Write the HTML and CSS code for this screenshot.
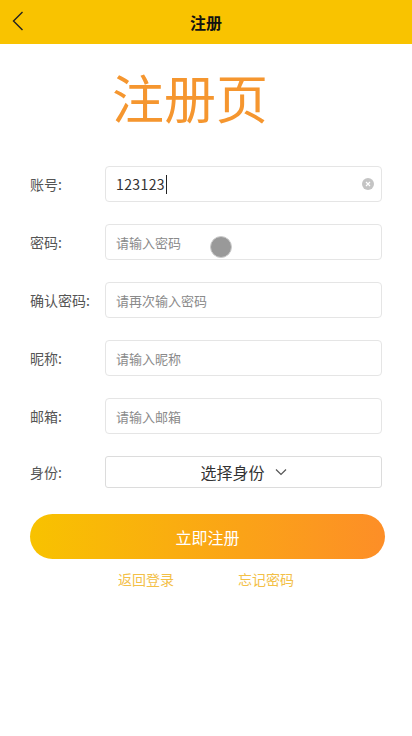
FILE: index.html
```html
<!DOCTYPE html>
<html lang="zh-CN">
<head>
    <meta charset="UTF-8">
    <meta name="viewport" content="width=device-width, initial-scale=1.0">
    <title>注册</title>
    <link rel="stylesheet" href="styles.css">
</head>
<body>

    <div class="header">
        <span class="back">
            <svg width="12" height="20" viewBox="0 0 12 20"><path d="M10.5 1 L1.5 10 L10.5 19" fill="none" stroke="#222" stroke-width="1.4"/></svg>
        </span>
        <span class="header-title">注册</span>
    </div>

    <h1 class="page-title">注册页</h1>

    <div class="form">
        <div class="row">
            <label for="account">账号:</label>
            <div class="field">
                <input type="text" id="account" value="123123">
                <span class="caret"></span>
                <span class="clear">
                    <svg width="6" height="6" viewBox="0 0 6 6"><path d="M1 1 L5 5 M5 1 L1 5" stroke="#fff" stroke-width="1.2"/></svg>
                </span>
            </div>
        </div>
        <div class="row">
            <label for="pwd">密码:</label>
            <div class="field">
                <input type="password" id="pwd" placeholder="请输入密码">
                <span class="touch"></span>
            </div>
        </div>
        <div class="row">
            <label for="pwd2">确认密码:</label>
            <div class="field">
                <input type="password" id="pwd2" placeholder="请再次输入密码">
            </div>
        </div>
        <div class="row">
            <label for="nick">昵称:</label>
            <div class="field">
                <input type="text" id="nick" placeholder="请输入昵称">
            </div>
        </div>
        <div class="row">
            <label for="mail">邮箱:</label>
            <div class="field">
                <input type="text" id="mail" placeholder="请输入邮箱">
            </div>
        </div>
        <div class="row row-select">
            <label>身份:</label>
            <div class="select">
                <span>选择身份</span>
                <svg width="12" height="8" viewBox="0 0 12 8"><path d="M1 1.5 L6 6.5 L11 1.5" fill="none" stroke="#555" stroke-width="1.2"/></svg>
            </div>
        </div>
    </div>

    <button class="submit">立即注册</button>

    <div class="links">
        <a href="#">返回登录</a>
        <a href="#">忘记密码</a>
    </div>

</body>
</html>
```

FILE: styles.css
```css
body {
    margin: 0;
    font-family: "Noto Sans CJK SC", "Noto Sans", sans-serif;
    background: #fff;
    color: #333;
}

.header {
    position: relative;
    height: 44px;
    background: #f9c300;
    display: flex;
    align-items: center;
    justify-content: center;
}

.back {
    position: absolute;
    left: 12px;
    top: 11px;
    display: flex;
}

.header-title {
    font-size: 16px;
    font-weight: bold;
    color: #111;
}

.page-title {
    margin: 23px 0 0;
    height: 60px;
    line-height: 60px;
    text-align: center;
    font-size: 52px;
    font-weight: normal;
    color: #f5962f;
    padding-right: 32px;
}

.form {
    margin-top: 39px;
    padding: 0 30px;
}

.row {
    display: flex;
    align-items: center;
    height: 36px;
    margin-bottom: 22px;
}

.row-select {
    height: 32px;
    margin-bottom: 26px;
}

.row label {
    width: 75px;
    flex: none;
    font-size: 14px;
    color: #555;
}

.field {
    position: relative;
    flex: 1;
    height: 100%;
}

.field input {
    box-sizing: border-box;
    width: 100%;
    height: 100%;
    padding: 0 10px;
    border: 1px solid #e5e5e5;
    border-radius: 4px;
    font-family: inherit;
    font-size: 14px;
    letter-spacing: 0.4px;
    color: #333;
    outline: none;
}

.field input::placeholder {
    font-size: 13px;
    letter-spacing: 0;
    color: #8a8a8a;
}

.caret {
    position: absolute;
    left: 61px;
    top: 9px;
    width: 1px;
    height: 19px;
    background: #222;
}

.clear {
    position: absolute;
    right: 8px;
    top: 12px;
    width: 12px;
    height: 12px;
    border-radius: 50%;
    background: #c4c4c4;
    display: flex;
    align-items: center;
    justify-content: center;
}

/* punto de toque */
.touch {
    position: absolute;
    left: 105px;
    top: 12px;
    width: 20px;
    height: 20px;
    border-radius: 50%;
    background: #999;
    border: 1px solid #ccc;
}

.select {
    box-sizing: border-box;
    flex: 1;
    height: 100%;
    border: 1px solid #dcdcdc;
    border-radius: 3px;
    display: flex;
    align-items: center;
    justify-content: center;
    gap: 10px;
    font-size: 16px;
    color: #333;
}

.submit {
    display: block;
    width: 355px;
    height: 45px;
    margin-left: 30px;
    border: none;
    border-radius: 23px;
    background: linear-gradient(90deg, #f8c200 0%, #fd8e27 100%);
    color: #fff;
    font-family: inherit;
    font-size: 16px;
}

.links {
    margin-top: 10px;
    display: flex;
    justify-content: center;
    gap: 64px;
    line-height: 20px;
}

.links a {
    font-size: 14px;
    color: #f3c047;
    text-decoration: none;
}
```
